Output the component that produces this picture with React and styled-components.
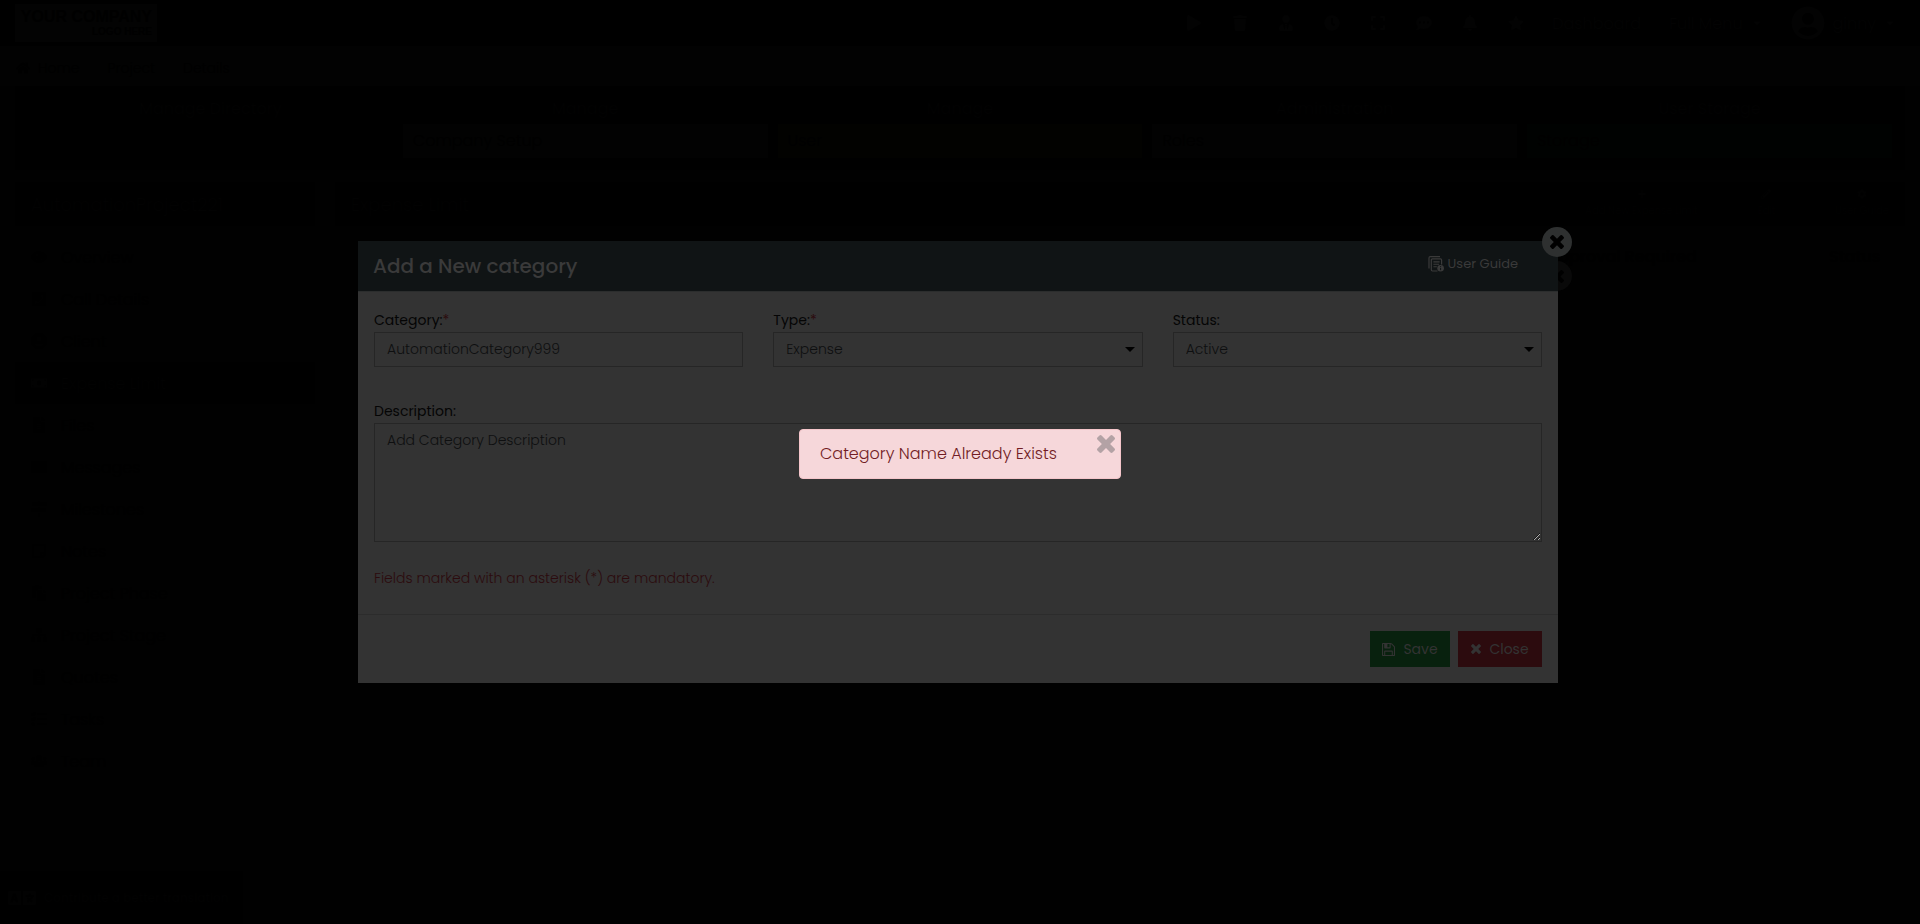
import React from "react";
import styled, { createGlobalStyle } from "styled-components";
import {
  FaPlay, FaTrash, FaUserTie, FaClock, FaExpand, FaCommentDots, FaBell, FaStar, FaCaretDown,
  FaUserCircle, FaHome, FaEye, FaPhoneSquare, FaMoneyBill, FaFileAlt, FaEnvelope,
  FaMapSigns, FaRegStickyNote, FaPaste, FaSitemap, FaTasks, FaUsers, FaLanguage,
  FaPlus, FaPencilAlt, FaCog,
} from "react-icons/fa";

const GlobalStyle = createGlobalStyle`
  * { box-sizing: border-box; }
  html, body { margin: 0; background: #010101; }
  body, input, select, textarea, button {
    font-family: Poppins, Inter, "Liberation Sans", sans-serif;
    font-size: 14px;
    font-weight: 300;
  }
  a { color: inherit; text-decoration: none; }
`;

const Page = styled.div`
  min-height: 100vh;
  display: flex;
  flex-direction: column;
  color: #000;
  overflow: hidden;
`;

const TopBar = styled.header`
  height: 46px;
  display: flex;
  align-items: center;
  justify-content: space-between;
  padding: 0 24px 0 15px;
  background: #000;
  color: #030303;
`;

const Logo = styled.a`
  width: 142px;
  height: 38px;
  padding: 4px 5px;
  background: #030303;
  color: #000;
  font-family: "Liberation Sans", sans-serif;
  font-size: 16px;
  font-weight: 700;
  line-height: 18px;
  text-align: right;
  white-space: nowrap;
`;

const Tagline = styled.span`
  display: block;
  font-size: 10px;
  line-height: 12px;
`;

const TopMenu = styled.nav`
  display: flex;
  align-items: center;
  gap: 28px;
  font-size: 16px;
`;

const IconMenu = styled.div`
  display: flex;
  align-items: center;
  gap: 30px;
`;

const MenuLink = styled.a`
  display: inline-flex;
  align-items: center;
  gap: 8px;
`;

const Crumbs = styled.nav`
  height: 40px;
  display: flex;
  align-items: center;
  gap: 28px;
  padding: 4px 16px 0;
  background: #020202;
`;

const QuickPanel = styled.section`
  margin: 0 15px;
  padding: 8px 13px 12px;
  display: grid;
  grid-template-columns: repeat(5, 1fr);
  gap: 10px;
  background: #000;
`;

const QuickTitle = styled.h2`
  margin: 0;
  font-size: 16px;
  font-weight: 400;
  line-height: 30px;
  text-align: center;
  color: #020202;
`;

const QuickLink = styled.a`
  display: block;
  padding: 0 10px;
  line-height: 34px;
  font-size: 16px;
  background: ${(p) => p.$tone};
`;

const Columns = styled.main`
  flex: 1;
  display: grid;
  grid-template-columns: 300px 1fr;
  gap: 20px;
  padding: 12px 15px 0;
`;

const PanelHead = styled.div`
  height: 44px;
  display: flex;
  align-items: center;
  justify-content: space-between;
  padding: 0 16px;
  background: #000;
  color: #020202;
  font-size: 18px;
`;

const PanelTools = styled.div`
  display: flex;
  gap: 60px;
  font-size: 10px;
`;

const Tool = styled.a`
  display: flex;
  flex-direction: column;
  align-items: center;
  gap: 4px;
`;

const SideLink = styled.a`
  height: 42px;
  display: flex;
  align-items: center;
  gap: 14px;
  padding: 0 16px;
  font-size: 16px;
  background: ${(p) => (p.$active ? "#000" : "transparent")};
  color: ${(p) => (p.$active ? "#020202" : "#000")};
`;

const SideList = styled.nav`
  padding-top: 10px;
`;

const Table = styled.table`
  width: 100%;
  margin-top: 12px;
  border-spacing: 0;
  text-align: left;
  font-size: 16px;
  th { font-weight: 500; height: 36px; padding: 0; width: 282px; }
  th:first-child { width: auto; }
  th:last-child { width: 76px; }
`;

const Footer = styled.footer`
  height: 53px;
  width: 243px;
  display: flex;
  align-items: center;
  gap: 8px;
  padding: 0 8px;
  background: #000;
  color: #020202;
  font-size: 12px;
  font-weight: 500;
  white-space: nowrap;
`;

const Overlay = styled.div`
  position: fixed;
  inset: 0;
  display: flex;
  align-items: center;
  justify-content: center;
  padding: ${(p) => p.$inset};
`;

const Round = styled.button`
  position: absolute;
  top: ${(p) => p.$top};
  right: -14px;
  width: 30px;
  height: 30px;
  display: flex;
  align-items: center;
  justify-content: center;
  padding: 0;
  border: 0;
  border-radius: 50%;
  background: ${(p) => p.$tone};
  color: #000;
`;

const ModalWrap = styled.div`
  position: relative;
  width: 1200px;
  max-width: 90%;
`;

const Dialog = styled.form`
  position: relative;
  background: #333;
`;

const DialogHead = styled.header`
  height: 51px;
  display: flex;
  align-items: center;
  justify-content: space-between;
  padding: 0 40px 0 15px;
  background: #101415;
  border-bottom: 1px solid #2b2d2d;
`;

const DialogTitle = styled.h1`
  margin: 0;
  color: #3a3a3a;
  font-size: 20px;
  font-weight: 500;
`;

const Guide = styled.a`
  display: flex;
  align-items: center;
  gap: 4px;
  padding-bottom: 4px;
  color: #3a3a3a;
  font-size: 13px;
  font-weight: 400;
`;

const DialogBody = styled.div`
  padding: 18px 16px 25px;
`;

const FieldRow = styled.div`
  display: grid;
  grid-template-columns: repeat(3, 1fr);
  gap: 30px;
  margin-bottom: 34px;
`;

const Field = styled.div`
  display: flex;
  flex-direction: column;
`;

const Label = styled.label`
  padding-bottom: 2px;
  line-height: 20px;
  color: #050505;
  font-weight: 400;
`;

const Star = styled.span`
  color: #2c0b0e;
`;

const control = `
  width: 100%;
  border: 1px solid #262626;
  border-radius: 0;
  background: transparent;
  color: #0e0f10;
  padding: 6px 12px;
  outline: 0;
`;

const Input = styled.input`
  ${control}
  height: 35px;
`;

const SelectBox = styled.div`
  display: grid;
  align-items: center;
  > * { grid-area: 1 / 1; }
  > svg { justify-self: end; margin-right: 8px; color: #000; pointer-events: none; }
`;

const Select = styled.select`
  ${control}
  height: 35px;
  padding: 5px 12px 7px;
  appearance: none;
`;

const Area = styled.textarea`
  ${control}
  height: 119px;
  resize: vertical;
  &::placeholder { color: #0e0f10; opacity: 1; }
`;

const Note = styled.p`
  margin: 25px 0 0;
  line-height: 22px;
  color: #2c0b0e;
`;

const DialogFoot = styled.footer`
  display: flex;
  justify-content: flex-end;
  gap: 8px;
  padding: 16px;
  border-top: 1px solid #2c2c2c;
`;

const Action = styled.button`
  width: ${(p) => p.$width};
  height: 36px;
  display: flex;
  align-items: center;
  justify-content: center;
  gap: 8px;
  padding: 0;
  border: 0;
  font-weight: 400;
  color: #333;
  background: ${(p) => p.$tone};
`;

const Alert = styled.div`
  width: 322px;
  height: 50px;
  display: flex;
  justify-content: space-between;
  padding: 5px 5px 5px 20px;
  border: 1px solid #f5c6cb;
  border-radius: 4px;
  background: #f6d7da;
  color: #721c24;
  font-size: 16px;
  line-height: 38px;
`;

const Dismiss = styled.button`
  align-self: flex-start;
  display: flex;
  padding: 0;
  border: 0;
  background: transparent;
  color: #b3a2a5;
`;

const Cross = ({ size }) => (
  <svg width={size} height={size} viewBox="302 366 1188 1188" fill="currentColor" aria-hidden="true">
    <path d="M1490 1322q0 40-28 68l-136 136q-28 28-68 28t-68-28l-294-294-294 294q-28 28-68 28t-68-28l-136-136q-28-28-28-68t28-68l294-294-294-294q-28-28-28-68t28-68l136-136q28-28 68-28t68 28l294 294 294-294q28-28 68-28t68 28l136 136q28 28 28 68t-28 68l-294 294 294 294q28 28 28 68z" />
  </svg>
);

const Floppy = () => (
  <svg width="13" height="13" viewBox="128 128 1536 1536" fill="currentColor" aria-hidden="true">
    <path d="M512 1536h768v-384h-768v384zm896 0h128v-896q0-14-10-38.5t-20-34.5l-281-281q-10-10-34-20t-39-10v416q0 40-28 68t-68 28h-576q-40 0-68-28t-28-68v-416h-128v1280h128v-416q0-40 28-68t68-28h832q40 0 68 28t28 68v416zm-384-928v-320q0-13-9.5-22.5t-22.5-9.5h-192q-13 0-22.5 9.5t-9.5 22.5v320q0 13 9.5 22.5t22.5 9.5h192q13 0 22.5-9.5t9.5-22.5zm640 32v928q0 40-28 68t-68 28h-1344q-40 0-68-28t-28-68v-1344q0-40 28-68t68-28h928q40 0 88 20t76 48l280 280q28 28 48 76t20 88z" />
  </svg>
);

const GuideIcon = () => (
  <svg width="16" height="16" viewBox="0 0 16 16" fill="none" stroke="currentColor" aria-hidden="true">
    <path d="M1 12.5V2Q1 .7 2.3.7H12" strokeWidth="1.2" />
    <path d="M9.5 15H4.5Q3.3 15 3.3 13.8V4Q3.3 2.9 4.5 2.9H12.5Q13.6 2.9 13.6 4V8.5" strokeWidth="1.2" />
    <path d="M5.4 5.9H11.6M5.4 8.3H11M5.4 10.7H8.8" strokeWidth="1.1" />
    <circle cx="12.6" cy="12.2" r="3.3" fill="currentColor" stroke="none" />
    <path d="M12.6 10.2V11M12.6 11.8V14.2" stroke="#101415" strokeWidth="1" />
  </svg>
);

const Caret = () => (
  <svg width="10" height="5" viewBox="0 0 10 5" fill="currentColor" aria-hidden="true">
    <path d="M0 0H10L5 5Z" />
  </svg>
);

const topIcons = [FaPlay, FaTrash, FaUserTie, FaClock, FaExpand, FaCommentDots, FaBell, FaStar];

const quick = [
  ["Manage Directory", "Company Directory", "#000"],
  ["Manage", "Company Setup", "#020202"],
  ["Manage", "User", "#020200"],
  ["Administration", "Roles", "#020202"],
  ["User Storage", "Storage", "#000201"],
];

const side = [
  [FaEye, "Overview"],
  [FaPhoneSquare, "Call Details"],
  [FaUserCircle, "Client"],
  [FaMoneyBill, "Expense Limit"],
  [FaFileAlt, "Files"],
  [FaEnvelope, "Messages"],
  [FaMapSigns, "Milestones"],
  [FaRegStickyNote, "Notes"],
  [FaPaste, "Project Phase"],
  [FaSitemap, "Project Stage"],
  [FaFileAlt, "Quotes"],
  [FaTasks, "Tasks"],
  [FaUsers, "Team"],
];

export default function App() {
  return (
    <>
      <GlobalStyle />
      <Page>
        <TopBar>
          <Logo href="#">YOUR COMPANY<Tagline>LOGO HERE</Tagline></Logo>
          <TopMenu>
            <IconMenu>
              {topIcons.map((Icon, i) => <MenuLink href="#" key={i}><Icon /></MenuLink>)}
            </IconMenu>
            <MenuLink href="#">Dashboard</MenuLink>
            <MenuLink href="#">Full Menu <FaCaretDown size={12} /></MenuLink>
            <MenuLink href="#"><FaUserCircle size={34} /> ginny <FaCaretDown size={12} /></MenuLink>
          </TopMenu>
        </TopBar>
        <Crumbs>
          <MenuLink href="#"><FaHome /> Home</MenuLink>
          <a href="#">Project</a>
          <span>Details</span>
        </Crumbs>
        <QuickPanel>
          {quick.map(([title, link, tone]) => (
            <div key={link}>
              <QuickTitle>{title}</QuickTitle>
              <QuickLink href="#" $tone={tone}>{link}</QuickLink>
            </div>
          ))}
        </QuickPanel>
        <Columns>
          <aside>
            <PanelHead>AutomationProject221</PanelHead>
            <SideList>
              {side.map(([Icon, name]) => (
                <SideLink href="#" key={name} $active={name === "Expense Limit"}><Icon /> {name}</SideLink>
              ))}
            </SideList>
          </aside>
          <section>
            <PanelHead>
              Expense Limit
              <PanelTools>
                <Tool href="#"><FaPlus />Add New Expense Limit</Tool>
                <Tool href="#"><FaPencilAlt />Edit</Tool>
                <Tool href="#"><FaCog />User Guide</Tool>
              </PanelTools>
            </PanelHead>
            <Table>
              <thead><tr><th aria-label="Name" /><th>Approval Required</th><th>Status</th></tr></thead>
            </Table>
          </section>
        </Columns>
        <Footer><FaLanguage size={28} /> Contribute a better translation</Footer>
      </Page>

      <Overlay $inset="0 4px 0 0">
        <ModalWrap>
          <Round type="button" aria-label="Close previous window" $top="20px" $tone="#090909"><Cross size={13} /></Round>
          <Dialog onSubmit={(e) => e.preventDefault()}>
            <DialogHead>
              <DialogTitle>Add a New category</DialogTitle>
              <Guide href="#"><GuideIcon />User Guide</Guide>
            </DialogHead>
            <DialogBody>
              <FieldRow>
                <Field>
                  <Label htmlFor="category">Category:<Star>*</Star></Label>
                  <Input id="category" defaultValue="AutomationCategory999" />
                </Field>
                <Field>
                  <Label htmlFor="type">Type:<Star>*</Star></Label>
                  <SelectBox>
                    <Select id="type"><option>Expense</option></Select>
                    <Caret />
                  </SelectBox>
                </Field>
                <Field>
                  <Label htmlFor="status">Status:</Label>
                  <SelectBox>
                    <Select id="status"><option>Active</option></Select>
                    <Caret />
                  </SelectBox>
                </Field>
              </FieldRow>
              <Field>
                <Label htmlFor="description">Description:</Label>
                <Area id="description" placeholder="Add Category Description" />
              </Field>
              <Note>Fields marked with an asterisk (*) are mandatory.</Note>
            </DialogBody>
            <DialogFoot>
              <Action type="submit" $width="80px" $tone="#08210e"><Floppy />Save</Action>
              <Action type="button" $width="84px" $tone="#2c0b0e"><Cross size={10} />Close</Action>
            </DialogFoot>
          </Dialog>
          <Round type="button" aria-label="Close window" $top="-14px" $tone="#2e3030"><Cross size={14} /></Round>
        </ModalWrap>
      </Overlay>

      <Overlay $inset="0 0 16px">
        <Alert role="alert">
          Category Name Already Exists
          <Dismiss type="button" aria-label="Dismiss"><Cross size={18} /></Dismiss>
        </Alert>
      </Overlay>
    </>
  );
}
